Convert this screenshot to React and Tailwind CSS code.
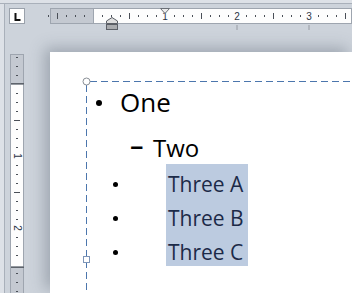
import React from "react";

const hMarks = Array.from({ length: 34 }, (_, i) => i - 5);
const vMarks = Array.from({ length: 27 }, (_, i) => i - 3);

const HRuler = () => (
  <svg width="302" height="24" className="block overflow-visible">
    <rect x="0.5" y="0.5" width="301" height="15" fill="#fdfdfd" stroke="#9ea5af" />
    <rect x="0.5" y="0.5" width="43" height="15" fill="#c4c9d1" stroke="#9ea5af" />
    {hMarks.map((k) => {
      const x = 43 + 9 * k;
      if (k === 0) return null;
      if (k > 0 && k % 8 === 0)
        return (
          <text
            key={k}
            x={x}
            y="12"
            textAnchor="middle"
            fontSize="10"
            fill="#2b3445"
            fontFamily="'Liberation Sans', sans-serif"
          >
            {k / 8}
          </text>
        );
      if (k % 4 === 0) return <rect key={k} x={x} y="5" width="1" height="6" fill="#4a4f57" />;
      return <rect key={k} x={x} y="7" width="1" height="2" fill="#4a4f57" />;
    })}
    {/* first line indent */}
    <polygon points="110.5,0.5 119.5,0.5 115,5.5" fill="#ececec" stroke="#6a6f76" />
    {/* left indent */}
    <polygon points="62,9.5 67.5,13 67.5,15.5 56.5,15.5 56.5,13" fill="#dedede" stroke="#5b5f66" />
    <rect x="56.5" y="16.5" width="11" height="5" fill="#a9abae" stroke="#5b5f66" />
    {/* default tab stops */}
    <rect x="186" y="17" width="2" height="5" fill="#b2b7bf" />
    <rect x="258" y="17" width="2" height="5" fill="#b2b7bf" />
  </svg>
);

const VRuler = () => (
  <svg width="15" height="239" className="block">
    <rect x="0.5" y="0.5" width="13" height="260" fill="#fdfdfd" stroke="#9ea5af" />
    <rect x="0.5" y="0.5" width="13" height="29.5" fill="#c4c9d1" stroke="#9ea5af" />
    <rect x="0.5" y="213" width="13" height="40" fill="#c4c9d1" stroke="#9ea5af" />
    <rect x="1" y="29" width="13" height="1.5" fill="#5d636b" />
    <rect x="1" y="212.5" width="13" height="1.5" fill="#5d636b" />
    {vMarks.map((k) => {
      const y = 30 + 9 * k;
      if (k === 0 || k === 20) return null;
      if (k > 0 && k % 8 === 0)
        return (
          <text
            key={k}
            x="7"
            y={y}
            textAnchor="middle"
            dominantBaseline="central"
            fontSize="10"
            fill="#2b3445"
            fontFamily="'Liberation Sans', sans-serif"
            transform={`rotate(90 7 ${y})`}
          >
            {k / 8}
          </text>
        );
      if (k % 4 === 0) return <rect key={k} x="4" y={y} width="6" height="1" fill="#4a4f57" />;
      return <rect key={k} x="6" y={y} width="2" height="1" fill="#4a4f57" />;
    })}
  </svg>
);

const TabBox = () => (
  <div className="w-[16px] h-[16px] bg-white border border-[#9aa1ab]">
    <svg width="14" height="14" className="block">
      <path d="M5.5 4v7h5" stroke="#111" strokeWidth="2" fill="none" />
    </svg>
  </div>
);

const threes = ["Three A", "Three B", "Three C"];

export default function App() {
  return (
    <div className="w-[352px] h-[293px] overflow-hidden flex flex-col bg-[#cdd3db] font-['Open_Sans',sans-serif]">
      <div className="h-[4px] bg-[#dde1e7] border-b border-[#a9b0ba]" />
      <div className="flex flex-1">
        <div className="w-[5px] bg-[#dde1e7] border-r border-[#a9b0ba]" />
        <div className="flex-1 grid grid-cols-[45px_1fr] grid-rows-[48px_1fr]">
          <div className="pl-[4px] pt-[4px]">
            <TabBox />
          </div>
          <div className="pt-[4px]">
            <HRuler />
          </div>
          <div className="pl-[5px] pt-[2px]">
            <VRuler />
          </div>
          <div className="bg-white shadow-[-5px_-4px_14px_rgba(70,80,95,0.35)] pt-[29px] pl-[36px]">
            <div className="relative h-full">
              <svg width="266" height="212" className="absolute left-0 top-0 overflow-visible">
                <line x1="4" y1="0.5" x2="270" y2="0.5" stroke="#4c76ad" strokeDasharray="7 4" />
                <line x1="0.5" y1="4" x2="0.5" y2="220" stroke="#4c76ad" strokeDasharray="7 4" />
                <circle cx="0.5" cy="0.5" r="3.5" fill="white" stroke="#8a8f96" />
                <rect x="-2.5" y="175.5" width="6" height="6" fill="white" stroke="#7d95b8" />
              </svg>
              <div className="pt-[8px]">
                <div className="flex items-start h-[26px]">
                  <div className="ml-[10px] mt-[11px] w-[6px] h-[6px] rounded-full bg-black" />
                  <div className="ml-[18px] text-[26px] leading-[26px] text-black">One</div>
                </div>
                <div className="mt-[21px] flex items-start h-[24px] pl-[44px] text-[24px] leading-[24px] text-black">
                  <span className="relative -top-[3px] w-[23px] text-[27px] font-semibold">–</span>
                  <span>Two</span>
                </div>
                <div className="mt-[4px]">
                  {threes.map((t) => (
                    <div key={t} className="flex items-start h-[34px]">
                      <div className="ml-[27px] mt-[18px] w-[5px] h-[5px] rounded-full bg-black" />
                      <div className="ml-[48px] w-[82px] h-[34px] bg-[#bccbe0] pl-[2px] pt-[6px] text-[21px] leading-[28px] text-[#1c2a48] whitespace-nowrap">
                        {t}
                      </div>
                    </div>
                  ))}
                </div>
              </div>
            </div>
          </div>
        </div>
      </div>
    </div>
  );
}
